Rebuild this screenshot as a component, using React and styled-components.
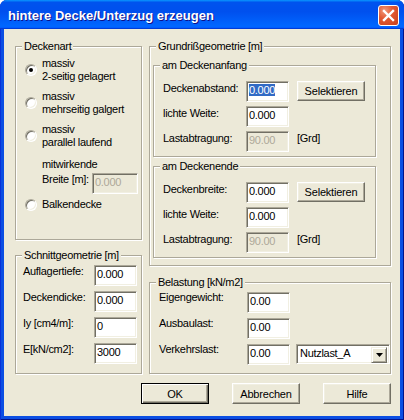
import React from 'react';
import styled, { createGlobalStyle } from 'styled-components';

const GlobalStyle = createGlobalStyle`
  html, body { margin: 0; padding: 0; background: #ffffff; }
  body {
    font-family: "Liberation Sans", Arial, sans-serif;
    font-size: 11px;
    letter-spacing: -0.3px;
    color: #000;
  }
  * { box-sizing: border-box; }
`;

const Window = styled.div`
  width: 404px;
  height: 420px;
  display: flex;
  flex-direction: column;
  background: #0b4ee3;
  border-radius: 7px 7px 0 0;
  overflow: hidden;
  box-shadow: inset 1px 0 #0831d9, inset -1px 0 #00138c, inset 0 -1px #00138c;
`;

const TitleBar = styled.div`
  height: 29px;
  flex: none;
  display: flex;
  align-items: flex-start;
  padding: 5px 5px 0 8px;
  background: linear-gradient(180deg, #0997ff 0%, #0053ee 8%, #0050ee 40%, #0066ff 88%, #0066ff 93%, #005bff 95%, #003dd7 96%, #003dd7 100%);
`;

const Title = styled.span`
  padding-top: 3px;
  font: bold 13px/16px "Liberation Sans", Arial, sans-serif;
  letter-spacing: 0;
  color: #fff;
  text-shadow: 1px 1px #0f1089;
`;

const CloseButton = styled.div`
  margin-left: auto;
  width: 21px;
  height: 21px;
  border: 1px solid #fff;
  border-radius: 3px;
  background: radial-gradient(circle at 30% 25%, #f29a7c 0%, #e25a33 40%, #c73f1b 100%);
  display: flex;
  align-items: center;
  justify-content: center;
`;

const Client = styled.div`
  flex: 1;
  margin: 0 4px 4px;
  background: #ece9d8;
  padding: 11px 9px 0 11px;
  display: flex;
  flex-direction: column;
`;

const Columns = styled.div`
  display: flex;
  gap: 7px;
  align-items: flex-start;
`;

const Column = styled.div`
  width: ${p => p.$w}px;
  display: flex;
  flex-direction: column;
  gap: ${p => p.$gap}px;
`;

const Group = styled.fieldset`
  margin: 0;
  padding: 0;
  min-width: 0;
  width: ${p => (p.$w ? `${p.$w}px` : 'auto')};
  height: ${p => p.$h}px;
  border: 1px solid #aca899;
  box-shadow: inset 1px 1px #fff, 1px 1px #fff;
`;

const Legend = styled.legend`
  margin-left: 6px;
  padding: 0 2px;
  line-height: 13px;
  font-size: 11px;
  background: #ece9d8;
`;

const GroupBody = styled.div`
  display: flex;
  flex-direction: column;
  padding: ${p => p.$pad};
  gap: ${p => p.$gap || 0}px;
`;

const Option = styled.div`
  display: flex;
  align-items: center;
  gap: 5px;
  margin-top: ${p => p.$mt || 0}px;
`;

const RadioMark = styled.span`
  flex: none;
  width: 12px;
  height: 12px;
  border-radius: 50%;
  border: 1px solid;
  border-color: #aca899 #fff #fff #aca899;
  box-shadow: inset 1px 1px #716f64, inset -1px -1px #f1efe2;
  background: #fff;
  display: flex;
  align-items: center;
  justify-content: center;
  &::after {
    content: '';
    width: 4px;
    height: 4px;
    border-radius: 50%;
    background: ${p => (p.$checked ? '#000' : 'transparent')};
  }
`;

const OptionText = styled.div`
  line-height: 13px;
  white-space: nowrap;
`;

const SubLabel = styled.div`
  margin: 9px 0 0 17px;
  line-height: 13px;
`;

const FieldRow = styled.div`
  display: flex;
  align-items: flex-start;
  height: 21px;
  margin-top: ${p => p.$mt || 0}px;
  padding-left: ${p => p.$indent || 0}px;
`;

const Label = styled.span`
  flex: none;
  width: ${p => p.$w}px;
  margin-top: ${p => p.$dy || 0}px;
  line-height: 13px;
  white-space: nowrap;
`;

const Field = styled.div`
  flex: none;
  width: ${p => p.$w || 43}px;
  height: 21px;
  border: 1px solid;
  border-color: #aca899 #fff #fff #aca899;
  box-shadow: inset 1px 1px #716f64, inset -1px -1px #f1efe2;
  background: ${p => (p.$disabled ? '#ece9d8' : '#fff')};
  color: ${p => (p.$disabled ? '#aca899' : '#000')};
  padding: 2px 0 0 2px;
  line-height: 13px;
  white-space: nowrap;
  overflow: hidden;
`;

const Selected = styled.span`
  background: #316ac5;
  color: #fff;
`;

const Unit = styled.span`
  margin: ${p => p.$dy || 0}px 0 0 8px;
  line-height: 13px;
`;

const Button = styled.button`
  flex: none;
  width: ${p => p.$w || 68}px;
  height: ${p => p.$h || 21}px;
  margin-left: ${p => p.$ml || 0}px;
  padding: 0;
  font: 11px "Liberation Sans", Arial, sans-serif;
  letter-spacing: -0.2px;
  color: #000;
  background: #ece9d8;
  border: 1px solid;
  border-color: ${p => (p.$default ? '#000' : '#fff #716f64 #716f64 #fff')};
  box-shadow: ${p =>
    p.$default
      ? 'inset 1px 1px #fff, inset -1px -1px #716f64, inset -2px -2px #aca899'
      : 'inset -1px -1px #aca899, inset 1px 1px #f1efe2'};
`;

const Combo = styled.div`
  flex: none;
  display: flex;
  align-items: flex-start;
  width: 94px;
  height: 20px;
  margin-left: 6px;
  border: 1px solid;
  border-color: #aca899 #fff #fff #aca899;
  box-shadow: inset 1px 1px #716f64, inset -1px -1px #f1efe2;
  background: #fff;
  padding: 2px;
`;

const ComboText = styled.span`
  flex: 1;
  line-height: 13px;
  padding-left: 1px;
`;

const ComboArrow = styled.span`
  flex: none;
  width: 16px;
  height: 16px;
  background: #ece9d8;
  border: 1px solid;
  border-color: #f1efe2 #716f64 #716f64 #f1efe2;
  box-shadow: inset 1px 1px #fff, inset -1px -1px #aca899;
  display: flex;
  align-items: center;
  justify-content: center;
`;

const ButtonRow = styled.div`
  display: flex;
  justify-content: flex-end;
  gap: 23px;
  margin-top: 9px;
`;

const CloseIcon = () => (
  <svg width="13" height="13" viewBox="0 0 13 13">
    <path d="M2 2 L11 11 M11 2 L2 11" stroke="#fff" strokeWidth="2.4" strokeLinecap="square" />
  </svg>
);

const ArrowIcon = () => (
  <svg width="7" height="4" viewBox="0 0 7 4">
    <path d="M0 0 H7 L3.5 4 Z" fill="#000" />
  </svg>
);

const EndGroup = ({ title, first, selected }) => (
  <Group $w={223} $h={98}>
    <Legend>{title}</Legend>
    <GroupBody $pad="9px 0 0 9px" $gap={4}>
      <FieldRow>
        <Label $w={83} $dy={1}>{first}</Label>
        <Field>{selected ? <Selected>0.000</Selected> : '0.000'}</Field>
        <Button $w={68} $h={20} $ml={8}>Selektieren</Button>
      </FieldRow>
      <FieldRow>
        <Label $w={83} $dy={1}>lichte Weite:</Label>
        <Field>0.000</Field>
      </FieldRow>
      <FieldRow>
        <Label $w={83} $dy={1}>Lastabtragung:</Label>
        <Field $disabled>90.00</Field>
        <Unit $dy={1}>[Grd]</Unit>
      </FieldRow>
    </GroupBody>
  </Group>
);

export default function App() {
  return (
    <>
      <GlobalStyle />
      <Window>
        <TitleBar>
          <Title>hintere Decke/Unterzug erzeugen</Title>
          <CloseButton><CloseIcon /></CloseButton>
        </TitleBar>
        <Client>
          <Columns>
            <Column $w={127} $gap={9}>
              <Group $h={200}>
                <Legend>Deckenart</Legend>
                <GroupBody $pad="4px 0 0 9px">
                  <Option>
                    <RadioMark $checked />
                    <OptionText>massiv<br />2-seitig gelagert</OptionText>
                  </Option>
                  <Option $mt={7}>
                    <RadioMark />
                    <OptionText>massiv<br />mehrseitig galgert</OptionText>
                  </Option>
                  <Option $mt={7}>
                    <RadioMark />
                    <OptionText>massiv<br />parallel laufend</OptionText>
                  </Option>
                  <SubLabel>mitwirkende</SubLabel>
                  <FieldRow $mt={2} $indent={17}>
                    <Label $w={50}>Breite [m]:</Label>
                    <Field $w={46} $disabled>0.000</Field>
                  </FieldRow>
                  <Option $mt={4}>
                    <RadioMark />
                    <OptionText>Balkendecke</OptionText>
                  </Option>
                </GroupBody>
              </Group>
              <Group $h={125}>
                <Legend>Schnittgeometrie [m]</Legend>
                <GroupBody $pad="3px 0 0 7px" $gap={5}>
                  <FieldRow>
                    <Label $w={71}>Auflagertiefe:</Label>
                    <Field>0.000</Field>
                  </FieldRow>
                  <FieldRow>
                    <Label $w={71}>Deckendicke:</Label>
                    <Field>0.000</Field>
                  </FieldRow>
                  <FieldRow>
                    <Label $w={71}>Iy [cm4/m]:</Label>
                    <Field>0</Field>
                  </FieldRow>
                  <FieldRow>
                    <Label $w={71}>E[kN/cm2]:</Label>
                    <Field>3000</Field>
                  </FieldRow>
                </GroupBody>
              </Group>
            </Column>
            <Column $w={242} $gap={10}>
              <Group $h={226}>
                <Legend>Grundrißgeometrie [m]</Legend>
                <GroupBody $pad="6px 0 0 3px" $gap={3}>
                  <EndGroup title="am Deckenanfang" first="Deckenabstand:" selected />
                  <EndGroup title="am Deckenende" first="Deckenbreite:" />
                </GroupBody>
              </Group>
              <Group $h={98}>
                <Legend>Belastung [kN/m2]</Legend>
                <GroupBody $pad="3px 0 0 9px" $gap={5}>
                  <FieldRow>
                    <Label $w={88} $dy={-1}>Eigengewicht:</Label>
                    <Field>0.00</Field>
                  </FieldRow>
                  <FieldRow>
                    <Label $w={88} $dy={-1}>Ausbaulast:</Label>
                    <Field>0.00</Field>
                  </FieldRow>
                  <FieldRow>
                    <Label $w={88} $dy={-1}>Verkehrslast:</Label>
                    <Field>0.00</Field>
                    <Combo>
                      <ComboText>Nutzlast_A</ComboText>
                      <ComboArrow><ArrowIcon /></ComboArrow>
                    </Combo>
                  </FieldRow>
                </GroupBody>
              </Group>
            </Column>
          </Columns>
          <ButtonRow>
            <Button $default>OK</Button>
            <Button>Abbrechen</Button>
            <Button>Hilfe</Button>
          </ButtonRow>
        </Client>
      </Window>
    </>
  );
}
